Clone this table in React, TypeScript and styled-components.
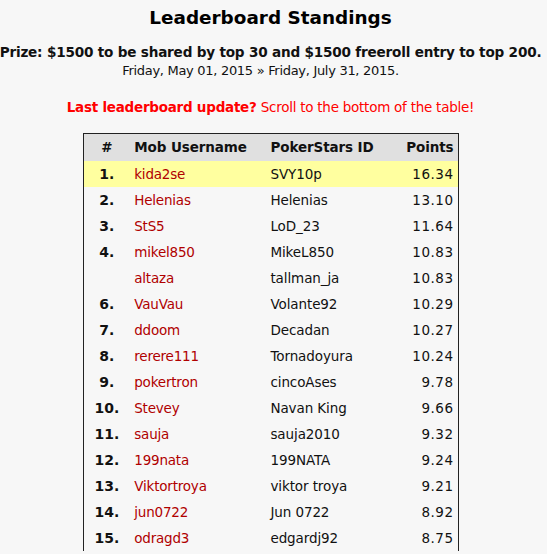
import React from "react";
import styled, { createGlobalStyle } from "styled-components";

const Global = createGlobalStyle`
  html, body { margin: 0; padding: 0; background: #f7f7f7; }
  body { font-family: "DejaVu Sans", Verdana, sans-serif; color: #111; }
`;

const Page = styled.div`
  display: flex;
  flex-direction: column;
  align-items: center;
  padding-top: 6px;
  padding-right: 6px;
`;

const Title = styled.h1`
  margin: 0;
  font-size: 18.4px;
  font-weight: bold;
  line-height: 24px;
  color: #000;
`;

const Prize = styled.div`
  margin-top: 13px;
  font-size: 13.6px;
  font-weight: bold;
  line-height: 18px;
  white-space: nowrap;
  letter-spacing: -0.2px;
`;

const Dates = styled.div`
  margin-top: 1px;
  font-size: 13px;
  line-height: 18px;
  letter-spacing: -0.3px;
  padding-right: 20px;
`;

const Update = styled.div`
  margin-top: 18px;
  font-size: 13.5px;
  line-height: 18px;
  color: #ff0000;
  letter-spacing: -0.25px;
  strong { font-weight: bold; }
`;

const Table = styled.table`
  margin-top: 17px;
  width: 376px;
  border-collapse: collapse;
  border: 1px solid #222;
  border-bottom: none;
  font-size: 13.5px;
`;

const HeadRow = styled.tr`
  background: #e0e0e0;
  height: 27px;
`;

const Th = styled.th<{ $align?: string; $w: number }>`
  width: ${(p) => p.$w}px;
  text-align: ${(p) => p.$align || "left"};
  font-weight: bold;
  padding: 0 4px;
  color: #111;
  letter-spacing: -0.1px;
`;

const Row = styled.tr<{ $hl?: boolean }>`
  height: 26px;
  background: ${(p) => (p.$hl ? "#ffff9f" : "transparent")};
`;

const RankCell = styled.td`
  text-align: center;
  font-weight: bold;
  font-size: 14px;
  padding: 0 4px;
`;

const UserCell = styled.td`
  color: #b00000;
  padding: 0 4px;
  letter-spacing: -0.2px;
`;

const IdCell = styled.td`
  padding: 0 4px;
  letter-spacing: -0.1px;
`;

const PtsCell = styled.td`
  text-align: right;
  padding: 0 4px;
  letter-spacing: 0.5px;
`;

const rows: [string, string, string, string][] = [
  ["1.", "kida2se", "SVY10p", "16.34"],
  ["2.", "Helenias", "Helenias", "13.10"],
  ["3.", "StS5", "LoD_23", "11.64"],
  ["4.", "mikel850", "MikeL850", "10.83"],
  ["", "altaza", "tallman_ja", "10.83"],
  ["6.", "VauVau", "Volante92", "10.29"],
  ["7.", "ddoom", "Decadan", "10.27"],
  ["8.", "rerere111", "Tornadoyura", "10.24"],
  ["9.", "pokertron", "cincoAses", "9.78"],
  ["10.", "Stevey", "Navan King", "9.66"],
  ["11.", "sauja", "sauja2010", "9.32"],
  ["12.", "199nata", "199NATA", "9.24"],
  ["13.", "Viktortroya", "viktor troya", "9.21"],
  ["14.", "jun0722", "Jun 0722", "8.92"],
  ["15.", "odragd3", "edgardj92", "8.75"],
];

export default function App() {
  return (
    <>
      <Global />
      <Page>
        <Title>Leaderboard Standings</Title>
        <Prize>Prize: $1500 to be shared by top 30 and $1500 freeroll entry to top 200.</Prize>
        <Dates>Friday, May 01, 2015 » Friday, July 31, 2015.</Dates>
        <Update>
          <strong>Last leaderboard update?</strong> Scroll to the bottom of the table!
        </Update>
        <Table>
          <thead>
            <HeadRow>
              <Th $align="center" $w={38}>#</Th>
              <Th $w={126}>Mob Username</Th>
              <Th $w={112}>PokerStars ID</Th>
              <Th $align="right" $w={60}>Points</Th>
            </HeadRow>
          </thead>
          <tbody>
            {rows.map(([r, u, id, p], i) => (
              <Row key={i} $hl={i === 0}>
                <RankCell>{r}</RankCell>
                <UserCell>{u}</UserCell>
                <IdCell>{id}</IdCell>
                <PtsCell>{p}</PtsCell>
              </Row>
            ))}
          </tbody>
        </Table>
      </Page>
    </>
  );
}
